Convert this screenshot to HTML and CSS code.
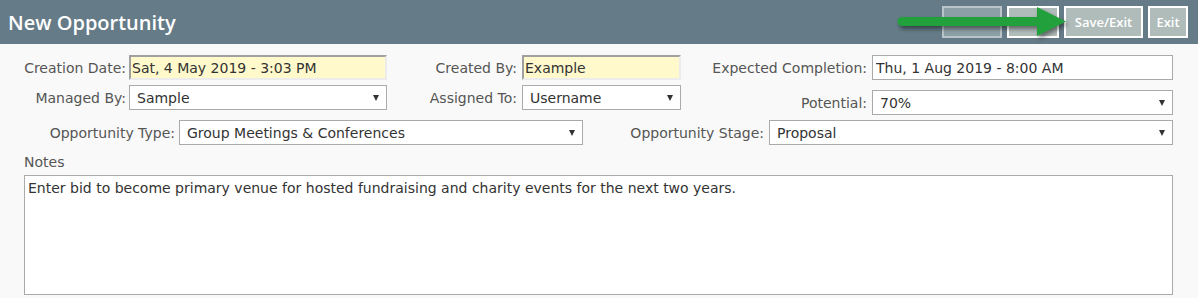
FILE: index.html
```html
<!DOCTYPE html>
<html lang="en">
<head>
  <meta charset="UTF-8">
  <title>New Opportunity</title>
  <link rel="stylesheet" href="styles.css">
</head>
<body>
  <div class="header">
    <h1>New Opportunity</h1>
    <div class="actions">
      <button class="btn btn-faded"></button>
      <button class="btn btn-narrow"></button>
      <button class="btn btn-save">Save/Exit</button>
      <button class="btn btn-exit">Exit</button>
    </div>
    <svg class="arrow" width="190" height="44" viewBox="880 0 190 44">
      <line x1="902" y1="21.5" x2="1040" y2="21.5" stroke="#21a03b" stroke-width="9" stroke-linecap="round"/>
      <polygon points="1037,7 1066,21.5 1037,36" fill="#21a03b"/>
    </svg>
  </div>

  <div class="form">
    <div class="top">
      <div class="fields col-1">
        <label>Creation Date:</label>
        <input class="readonly" type="text" value="Sat, 4 May 2019 - 3:03 PM" readonly>
        <label>Managed By:</label>
        <span class="select"><select><option>Sample</option></select><i></i></span>
      </div>
      <div class="fields col-2">
        <label>Created By:</label>
        <input class="readonly" type="text" value="Example" readonly>
        <label>Assigned To:</label>
        <span class="select"><select><option>Username</option></select><i></i></span>
      </div>
      <div class="fields col-3">
        <label>Expected Completion:</label>
        <input type="text" value="Thu, 1 Aug 2019 - 8:00 AM">
        <label>Potential:</label>
        <span class="select"><select><option>70%</option></select><i></i></span>
      </div>
    </div>

    <div class="fields row-type">
      <label>Opportunity Type:</label>
      <span class="select"><select><option>Group Meetings &amp; Conferences</option></select><i></i></span>
      <label>Opportunity Stage:</label>
      <span class="select stage"><select><option>Proposal</option></select><i></i></span>
    </div>

    <div class="notes-label">Notes</div>
    <textarea class="notes">Enter bid to become primary venue for hosted fundraising and charity events for the next two years.</textarea>
  </div>
</body>
</html>
```

FILE: styles.css
```css
body {
  margin: 0;
  background-color: #f9f9f9;
  font-family: 'DejaVu Sans', Verdana, sans-serif;
  font-size: 14px;
  color: #555;
}
.header {
  position: relative;
  height: 44px;
  background-color: #657b87;
  display: flex;
  align-items: center;
  justify-content: space-between;
  padding: 0 10px 0 8px;
}
.header h1 {
  margin: 0;
  font-family: 'Open Sans', sans-serif;
  font-weight: 600;
  font-size: 20px;
  color: #fff;
}
.actions {
  display: flex;
  gap: 5px;
}
.btn {
  height: 32px;
  padding: 0;
  border: 2px solid #fff;
  background-color: #b0bcba;
  color: #fff;
  font-family: 'Open Sans', sans-serif;
  font-weight: 600;
  font-size: 13px;
  text-align: center;
}
.btn-faded {
  width: 60px;
  background-color: #8d9fa6;
  border-color: #b9c5c9;
}
.btn-narrow {
  width: 52px;
}
.btn-save {
  width: 79px;
}
.btn-exit {
  width: 40px;
}
.arrow {
  position: absolute;
  left: 880px;
  top: 0;
  filter: drop-shadow(2px 3px 2px rgba(0,0,0,0.45));
}
.form {
  padding: 11px 25px 0 24px;
}
.top {
  display: flex;
  align-items: start;
}
.fields {
  display: grid;
  align-items: center;
  row-gap: 5px;
}
.fields label {
  text-align: right;
  white-space: nowrap;
}
.col-1 {
  grid-template-columns: 102px 258px;
  column-gap: 3px;
}
.col-2 {
  grid-template-columns: 130px 159px;
  column-gap: 5px;
}
.col-3 {
  grid-template-columns: 186px 301px;
  column-gap: 5px;
  row-gap: 10px;
}
.row-type {
  margin-top: 5px;
  grid-template-columns: 151px 404px 177px 405px;
  column-gap: 4px;
}
.row-type .stage {
  margin-left: 1px;
}
input, select, textarea {
  font-family: 'DejaVu Sans', Verdana, sans-serif;
  font-size: 14px;
  color: #333;
  box-sizing: border-box;
  margin: 0;
}
input {
  height: 25px;
  width: 100%;
  padding: 0 3px;
  background-color: #fff;
  border: 1px solid #aaa;
}
input.readonly {
  background-color: #fff9cc;
  border-width: 2px;
  border-color: #a0a0a0 #ececec #ececec #a0a0a0;
  padding: 0 1px;
}
.select {
  position: relative;
  display: block;
}
.select select {
  -webkit-appearance: none;
  appearance: none;
  width: 100%;
  height: 25px;
  padding: 0 20px 0 7px;
  background-color: #fff;
  border: 1px solid #aaa;
  border-radius: 0;
}
.select i {
  position: absolute;
  right: 8px;
  top: 10px;
  border-left: 3px solid transparent;
  border-right: 3px solid transparent;
  border-top: 6px solid #333;
  pointer-events: none;
}
.notes-label {
  margin-top: 8px;
  line-height: 18px;
}
.notes {
  display: block;
  margin-top: 4px;
  width: 1149px;
  height: 120px;
  padding: 3px 3px;
  line-height: 18px;
  border: 1px solid #aaa;
  background-color: #fff;
  resize: none;
}
```
